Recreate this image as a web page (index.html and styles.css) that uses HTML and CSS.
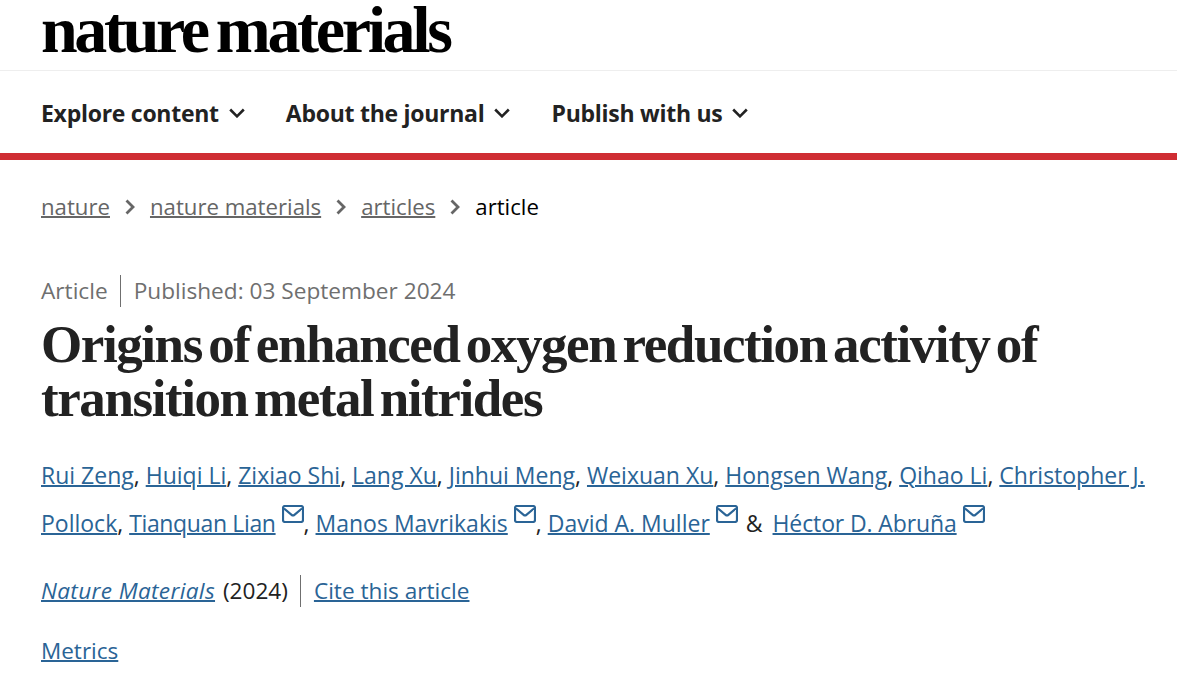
FILE: index.html
```html
<!DOCTYPE html>
<html lang="en">
<head>
<meta charset="utf-8">
<title>Origins of enhanced oxygen reduction activity of transition metal nitrides</title>
<link rel="stylesheet" href="styles.css">
</head>
<body>
<svg class="sprite" width="0" height="0" aria-hidden="true">
  <symbol id="mail" viewBox="0 0 22 18"><path d="M3 1h16a2 2 0 0 1 2 2v12a2 2 0 0 1-2 2H3a2 2 0 0 1-2-2V3a2 2 0 0 1 2-2zM2 3.5l7.6 6.3a2.2 2.2 0 0 0 2.8 0L20 3.5" fill="none" stroke="currentColor" stroke-width="2.2"/></symbol>
  <symbol id="down" viewBox="0 0 16 10"><path d="M1.2 1.5l6.8 6.8 6.8-6.8" fill="none" stroke="currentColor" stroke-width="2.6"/></symbol>
  <symbol id="right" viewBox="0 0 10 16"><path d="M1.5 1.5l6.5 6.5-6.5 6.5" fill="none" stroke="currentColor" stroke-width="2.8"/></symbol>
</svg>
<header class="masthead">
  <a class="logo" href="#">nature materials</a>
</header>
<nav class="mainnav">
  <a class="navitem" href="#">Explore content <svg class="chev"><use href="#down"/></svg></a>
  <a class="navitem" href="#">About the journal <svg class="chev"><use href="#down"/></svg></a>
  <a class="navitem" href="#">Publish with us <svg class="chev"><use href="#down"/></svg></a>
</nav>
<nav class="crumbs">
  <a href="#">nature</a><svg class="crumbsep"><use href="#right"/></svg>
  <a href="#">nature materials</a><svg class="crumbsep"><use href="#right"/></svg>
  <a href="#">articles</a><svg class="crumbsep"><use href="#right"/></svg>
  <span class="current">article</span>
</nav>
<main class="article">
  <ul class="meta">
    <li>Article</li>
    <li>Published: 03 September 2024</li>
  </ul>
  <h1 class="title">Origins of enhanced oxygen reduction activity of transition metal nitrides</h1>
  <p class="authors"><a href="#">Rui Zeng</a>, <a href="#">Huiqi Li</a>, <a href="#">Zixiao Shi</a>, <a href="#">Lang Xu</a>, <a href="#">Jinhui Meng</a>, <a href="#">Weixuan Xu</a>, <a href="#">Hongsen Wang</a>, <a href="#">Qihao Li</a>, <a href="#">Christopher J. Pollock</a>, <a class="tight" href="#">Tianquan Lian</a><svg class="mail"><use href="#mail"/></svg>, <a href="#">Manos Mavrikakis</a><svg class="mail"><use href="#mail"/></svg>, <a href="#">David A. Muller</a><svg class="mail"><use href="#mail"/></svg> <span class="amp">&amp;</span> <a class="snug" href="#">Héctor D. Abruña</a><svg class="mail"><use href="#mail"/></svg></p>
  <ul class="source">
    <li><a href="#"><i class="journal">Nature Materials</i></a> <span class="year">(2024)</span></li>
    <li><a href="#">Cite this article</a></li>
  </ul>
  <p class="metrics"><a href="#">Metrics</a></p>
</main>
</body>
</html>
```
FILE: styles.css
```css
html, body { margin: 0; padding: 0; background: #fff; overflow: hidden; }
body { font-family: "Open Sans", "Noto Sans", sans-serif; color: #222; font-size: 22px; }
a { text-decoration-thickness: 2px; }
.sprite { position: absolute; }
.masthead { height: 70px; padding-left: 41px; border-bottom: 1px solid #eee; }
.logo { display: block; font-family: "Liberation Serif", serif; font-weight: 700; font-size: 66px; line-height: 60px; letter-spacing: -3.35px; word-spacing: -4px; color: #000; text-decoration: none; }
.mainnav { display: flex; gap: 41px; height: 81px; padding-top: 1px; align-items: center; padding-left: 41px; border-bottom: 7px solid #cf2d33; }
.navitem { font-weight: 700; font-size: 23px; color: #222; text-decoration: none; letter-spacing: -.27px; display: flex; align-items: center; gap: 10px; }
.chev { width: 16px; height: 10px; color: #222; }
.crumbs { display: flex; align-items: center; padding: 32px 0 0 41px; font-size: 22.2px; line-height: 30px; color: #666; }
.crumbs a { color: #666; }
.crumbsep { width: 10px; height: 16px; margin: 0 15px; color: #666; }
.current { color: #000; }
.article { padding: 0 30px 0 41px; }
.meta, .source { list-style: none; margin: 0; padding: 0; display: flex; }
.meta { margin-top: 53px; color: #6f6f6f; line-height: 32px; font-size: 22.65px; }
.meta li + li, .source li + li { margin-left: 12px; padding-left: 13px; border-left: 1px solid #6f6f6f; }
.title { margin: 0; font-family: "Liberation Serif", serif; font-size: 53px; line-height: 54px; font-weight: 700; letter-spacing: -1.42px; word-spacing: -5.5px; color: #222; padding-top: 10px; }
.authors { margin: 26px 0 0; line-height: 48px; font-size: 23px; }
.authors a, .source a, .metrics a { color: #2a6496; }
.tight { letter-spacing: -.36px; }
.snug { letter-spacing: -.12px; }
.amp { margin: 0 4px 0 2px; }
.mail { width: 22px; height: 18px; margin: 0 0 0 6px; color: #2a6496; vertical-align: 9px; }
.source { margin-top: 28px; line-height: 32px; font-size: 22.6px; }
.journal { letter-spacing: .35px; }
.year { margin-left: 2px; }
.metrics { margin: 28px 0 0; line-height: 32px; font-size: 22.5px; }
```
